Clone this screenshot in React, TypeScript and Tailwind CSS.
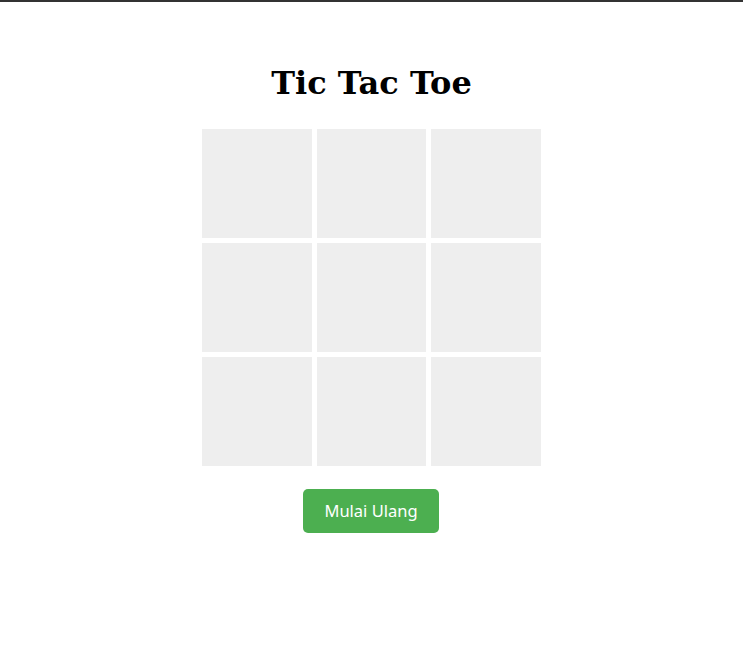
import { useState } from "react";

type Cell = "X" | "O" | null;

const App = () => {
  const [board, setBoard] = useState<Cell[]>(Array(9).fill(null));
  const [xTurn, setXTurn] = useState<boolean>(true);

  const play = (i: number) => {
    if (board[i]) return;
    const next = board.slice();
    next[i] = xTurn ? "X" : "O";
    setBoard(next);
    setXTurn(!xTurn);
  };

  const reset = () => {
    setBoard(Array(9).fill(null));
    setXTurn(true);
  };

  return (
    <div className="min-h-[650px] border-t-2 border-[#333] bg-white">
      <div className="flex flex-col items-center pt-[61px]">
        <h1 className="text-[32px] leading-[40px] font-bold text-black font-['DejaVu_Serif',serif]">
          Tic Tac Toe
        </h1>
        <div className="mt-[26px] grid w-[339px] grid-cols-3 gap-[5px]">
          {board.map((c, i) => (
            <button
              key={i}
              onClick={() => play(i)}
              className="flex h-[109px] items-center justify-center bg-[#eeeeee] text-5xl font-bold font-['DejaVu_Sans',sans-serif]"
            >
              {c}
            </button>
          ))}
        </div>
        <button
          onClick={reset}
          className="mt-[23px] mr-[1px] h-[44px] w-[136px] rounded-[5px] bg-[#4caf50] text-[16.5px] text-white font-['Noto_Sans',sans-serif]"
        >
          Mulai Ulang
        </button>
      </div>
    </div>
  );
};
export default App;
